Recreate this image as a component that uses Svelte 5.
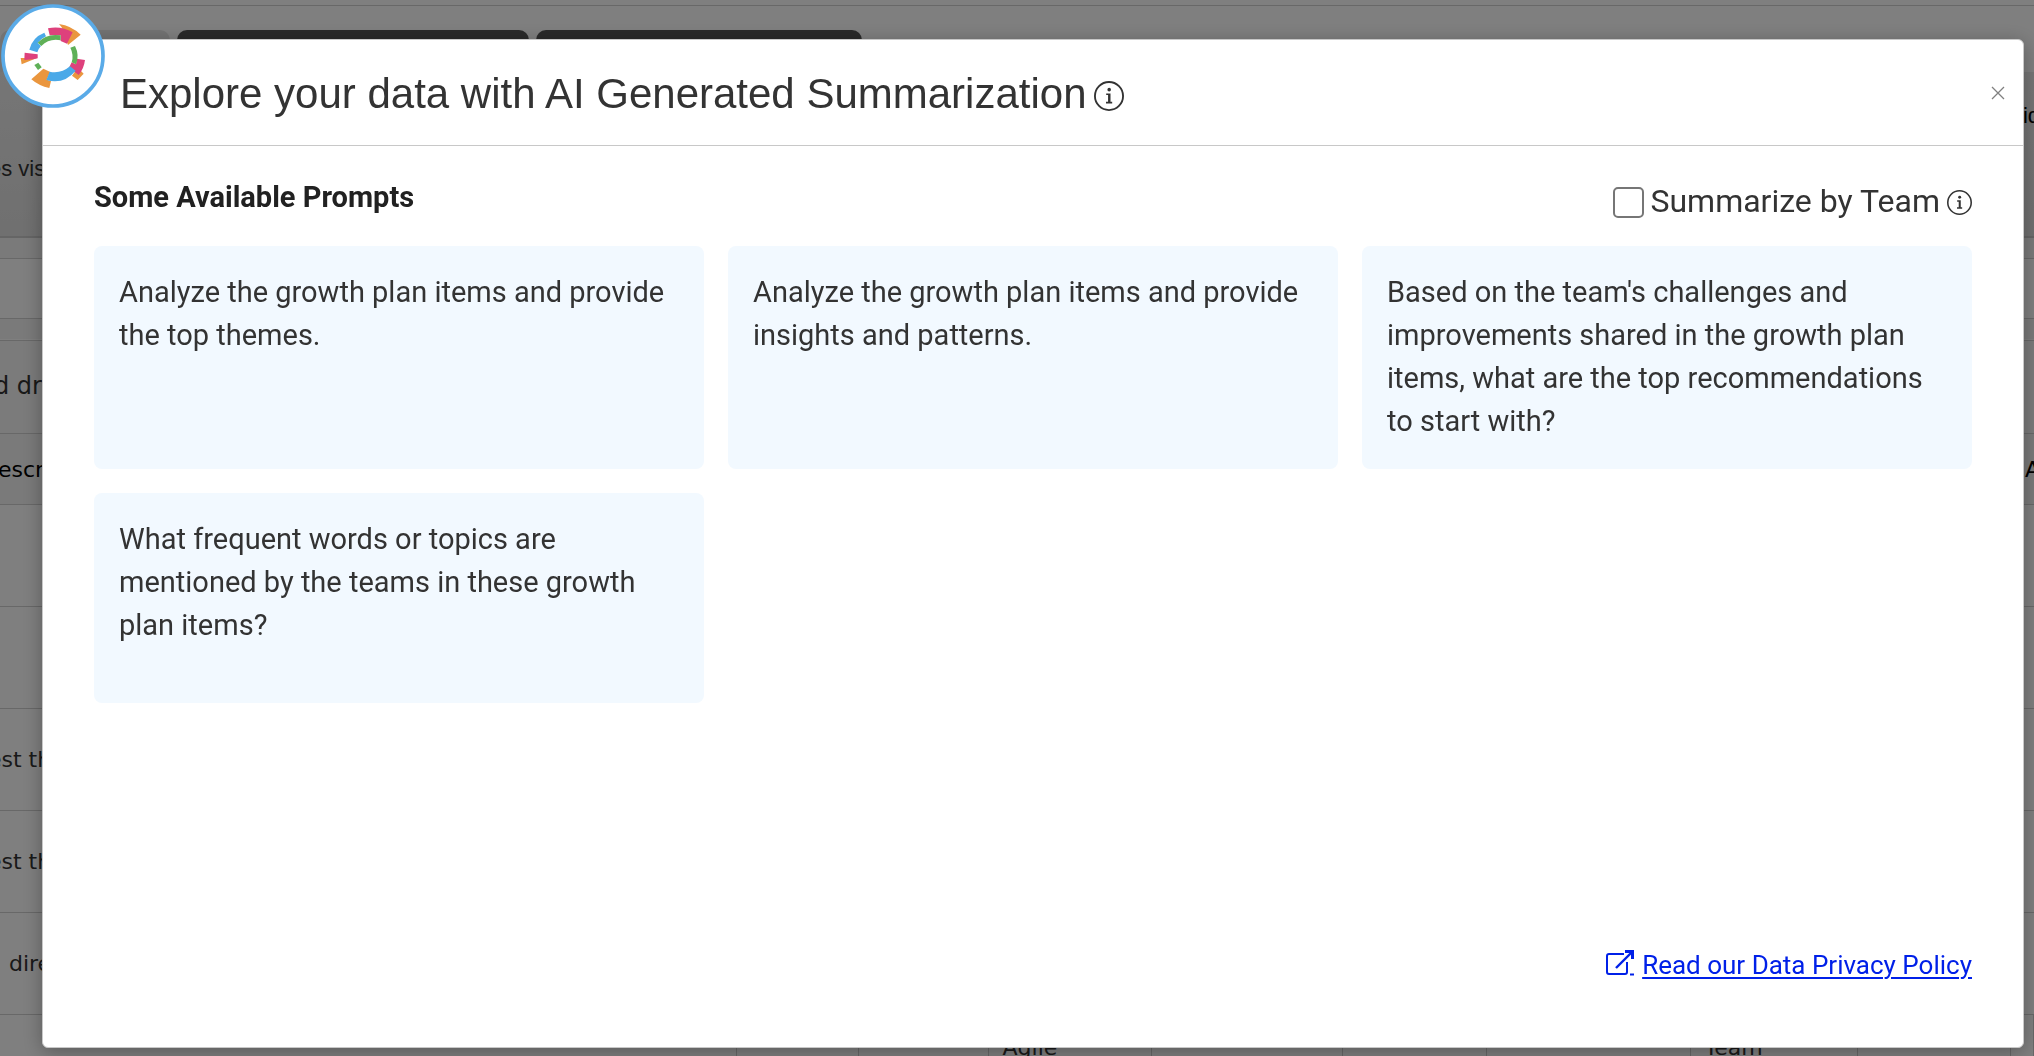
<script>
  const prompts = [
    "Analyze the growth plan items and provide the top themes.",
    "Analyze the growth plan items and provide insights and patterns.",
    "Based on the team's challenges and improvements shared in the growth plan items, what are the top recommendations to start with?",
    "What frequent words or topics are mentioned by the teams in these growth plan items?",
  ];

  const columns = [748, 122, 130, 163, 191, 144, 204, 167, 153];
  const rows = ["", "", "est th", "est th", "\u00a0\u00a0\u00a0dire"];

  let byTeam = $state(false);
  let open = $state(true);
</script>

{#snippet info()}
  <svg class="info" viewBox="0 0 16 16" fill="currentColor" aria-hidden="true">
    <path d="M8 15A7 7 0 1 1 8 1a7 7 0 0 1 0 14m0 1A8 8 0 1 0 8 0a8 8 0 0 0 0 16" />
    <path d="M6.5 6.6h2.3v4.5h.9v.9H6.4v-.9h1.1V7.5h-1z" />
    <circle cx="8.1" cy="4.6" r="0.95" />
  </svg>
{/snippet}

<div class="page">
  <div class="topline"></div>
  <div class="tabs">
    <div class="tab light"></div>
    <div class="tab second"></div>
    <div class="tab third"></div>
  </div>
  <div class="panel">
    <span>es vis</span>
    <span class="side">id</span>
  </div>
  <div class="filter"></div>
  <div class="group">d dr</div>
  <table>
    <colgroup>
      {#each columns as width}
        <col style="width: {width}px" />
      {/each}
      <col />
    </colgroup>
    <thead>
      <tr>
        <th>escr</th>
        <th colspan="8"></th>
        <th class="last">A</th>
      </tr>
    </thead>
    <tbody>
      {#each rows as row}
        <tr>
          <td>{row}</td>
          <td colspan="9"></td>
        </tr>
      {/each}
      <tr class="teams">
        <td></td>
        <td></td>
        <td></td>
        <td>Agile</td>
        <td></td>
        <td></td>
        <td></td>
        <td>Team</td>
        <td></td>
        <td></td>
      </tr>
    </tbody>
  </table>
</div>

{#if open}
  <div class="overlay">
    <div class="modal" role="dialog" aria-labelledby="title">
      <svg class="logo" viewBox="5 12 310 312" aria-hidden="true">
        <circle cx="160" cy="168" r="150" fill="#fff" stroke="#5aabe8" stroke-width="11" />
        <path fill="#ea963e" d="M178 72Q215 77 243 104L205 135L186 82Z" />
        <path fill="#de417c" d="M145 85Q185 77 219 97L202 131L183 123V106H150Z" />
        <path fill="#4aa9e8" d="M134 98Q98 112 89 149L113 157Q117 145 124 138L114 129Q124 116 139 109Z" />
        <path fill="#5fb057" d="M114 128Q140 99 183 106V121Q149 114 125 138Z" />
        <path fill="#ea963e" d="M244 213L252 221L234 240L217 227L228 212Z" />
        <path fill="#de417c" d="M231 176L256 180Q253 205 237 225L208 203L216 187L229 193Z" />
        <path fill="#5fb057" d="M212 143L226 138Q240 165 229 193L216 187Q223 165 212 143Z" />
        <path fill="#ea963e" d="M131 206L152 216L141 239L154 243L149 264Q118 258 95 238Z" />
        <path fill="#4aa9e8" d="M150 215Q184 222 211 199L228 212Q192 255 140 240Z" />
        <path fill="#5fb057" d="M104 195L116 188L126 202L115 210Z" />
        <path fill="#ea963e" d="M63 174H112L66 193Z" />
        <path fill="#de417c" d="M75 158L114 163V175L100 178L74 180Z" />
      </svg>

      <header>
        <h1 id="title">Explore your data with AI Generated Summarization</h1>
        {@render info()}
        <button class="close" aria-label="Close" onclick={() => open = false}>
          <svg viewBox="0 0 14 14" aria-hidden="true">
            <path d="M1 1L13 13M13 1L1 13" fill="none" stroke="#808080" stroke-width="1.3" />
          </svg>
        </button>
      </header>

      <div class="body">
        <div class="toolbar">
          <h2>Some Available Prompts</h2>
          <div class="summarize">
            <input type="checkbox" id="by-team" bind:checked={byTeam} />
            <label for="by-team">Summarize by Team</label>
            {@render info()}
          </div>
        </div>

        <div class="prompts">
          {#each prompts as prompt}
            <button class="prompt">{prompt}</button>
          {/each}
        </div>

        <a class="policy" href="#privacy">
          <svg viewBox="0 0 30 26" fill="none" stroke="currentColor" aria-hidden="true">
            <path d="M19 4H4Q2 4 2 6V22Q2 24 4 24H20Q22 24 22 22V12" stroke-width="2" />
            <path d="M11 18L27 2" stroke-width="2.4" />
            <path d="M20 1.5H27.5V9" stroke-width="3" />
            <path d="M25 24.5H29" stroke-width="2" />
          </svg>
          <span>Read our Data Privacy Policy</span>
        </a>
      </div>
    </div>
  </div>
{/if}

<style>
  :global(body) {
    background: #fff;
    overflow: hidden;
  }

  .page {
    height: 100vh;
    overflow: hidden;
    font-family: "DejaVu Sans", sans-serif;
    font-size: 22px;
    color: #333;
  }

  .topline {
    height: 5px;
    border-bottom: 1px solid #d0d0d0;
  }

  .tabs {
    display: flex;
    gap: 7px;
    height: 42px;
    padding-top: 24px;
  }

  .tab {
    border-radius: 10px 10px 0 0;
    background: #555;
  }

  .light {
    width: 170px;
    background: #e6e6e6;
  }

  .second {
    width: 352px;
  }

  .third {
    width: 326px;
  }

  .panel {
    position: relative;
    display: flex;
    align-items: center;
    height: 166px;
    margin-left: -11px;
    padding-top: 30px;
    box-sizing: border-box;
    border-bottom: 2px solid #cacaca;
    background: linear-gradient(#ececec, #e0e0e0);
    font-family: "Liberation Sans", sans-serif;
    line-height: 26px;
  }

  .side {
    position: absolute;
    top: 31px;
    right: -6px;
    color: #000;
  }

  .filter {
    height: 61px;
    margin: 20px 0 21px;
    border: solid #d0d0d0;
    border-width: 1px 0;
    box-sizing: border-box;
    box-shadow: 0 0 0 20px #f4f4f4;
  }

  .group {
    position: relative;
    height: 94px;
    line-height: 90px;
    box-sizing: border-box;
    border: solid #d0d0d0;
    border-width: 1px 0;
    background: #f6f6f6;
    font-size: 24px;
    text-indent: -6px;
  }

  table {
    width: calc(100% + 12px);
    margin-left: -12px;
    border-collapse: collapse;
    table-layout: fixed;
  }

  th {
    height: 70px;
    padding: 0 0 0 10px;
    border-bottom: 1px solid #d0d0d0;
    background: #f4f4f4;
    color: #000;
    font-weight: normal;
    text-align: left;
  }

  th.last {
    padding-left: 15px;
  }

  td {
    height: 101px;
    padding: 0;
    border-bottom: 1px solid #d0d0d0;
  }

  .teams td {
    height: 80px;
    padding: 20px 0 0 14px;
    border-right: 1px solid #d0d0d0;
    line-height: 26px;
    vertical-align: top;
  }

  .overlay {
    position: fixed;
    inset: 0;
    padding: 39px 10px 8px 42px;
    box-sizing: border-box;
    background: rgba(0, 0, 0, 0.5);
  }

  .modal {
    position: relative;
    display: flex;
    flex-direction: column;
    height: 100%;
    box-sizing: border-box;
    border: 1px solid #c8c8c8;
    border-radius: 6px;
    background: #fff;
    box-shadow: 0 4px 20px rgba(0, 0, 0, 0.3);
    color: #333;
    font-family: Roboto, sans-serif;
  }

  .logo {
    position: absolute;
    top: -36px;
    left: -42px;
    width: 104px;
    height: 104px;
  }

  header {
    display: flex;
    align-items: center;
    height: 105px;
    padding: 0 16px 0 77px;
    border-bottom: 1px solid #c8c8c8;
  }

  h1 {
    margin: 2px 0 0;
    font: 42px/48px "Liberation Sans", sans-serif;
  }

  .info {
    width: 25px;
    height: 25px;
    flex: none;
  }

  header .info {
    width: 30px;
    height: 30px;
    margin: 6px 0 0 7px;
  }

  .close {
    display: flex;
    margin-left: auto;
    padding: 2px;
    border: 0;
    background: none;
    cursor: pointer;
  }

  .close svg {
    width: 14px;
    height: 14px;
  }

  .body {
    display: flex;
    flex: 1;
    flex-direction: column;
    padding: 26px 51px 65px;
  }

  .toolbar {
    display: flex;
    justify-content: space-between;
    height: 74px;
  }

  h2 {
    margin: 8px 0 0;
    color: #212121;
    font-size: 29px;
    line-height: 34px;
  }

  .summarize {
    display: flex;
    align-items: center;
    height: 60px;
  }

  .summarize input {
    appearance: none;
    width: 31px;
    height: 31px;
    margin: 0 6px 0 0;
    border: 2px solid #767676;
    border-radius: 5px;
    background: #fff;
  }

  .summarize input:checked {
    background: #4aa9e8;
  }

  .summarize label {
    padding-bottom: 2px;
    font-size: 32px;
    line-height: 40px;
  }

  .summarize .info {
    margin-left: 7px;
  }

  .prompts {
    display: grid;
    grid-template-columns: repeat(3, 1fr);
    gap: 24px;
  }

  .prompt {
    display: flex;
    min-height: 210px;
    padding: 25px 25px 26px;
    border: 0;
    border-radius: 8px;
    background: #f2f9ff;
    color: #333;
    font: 29px/43px Roboto, sans-serif;
    text-align: left;
    cursor: pointer;
  }

  .policy {
    display: flex;
    align-items: center;
    gap: 7px;
    margin: auto 0 0 auto;
    color: #0020e8;
    font-size: 26px;
    line-height: 34px;
    text-decoration: none;
  }

  .policy svg {
    width: 30px;
    height: 26px;
    margin-bottom: 4px;
  }

  .policy span {
    text-decoration: underline;
    text-decoration-thickness: 2px;
    text-underline-offset: 3px;
  }
</style>
